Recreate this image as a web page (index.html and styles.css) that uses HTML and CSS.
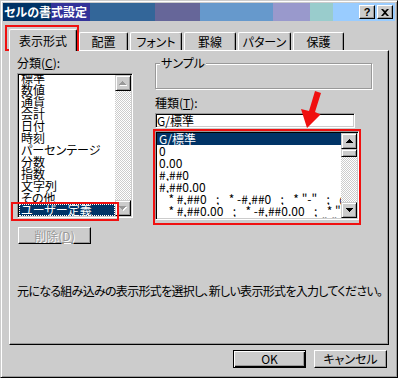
FILE: index.html
```html
<!DOCTYPE html>
<html lang="ja">
<head>
    <meta charset="UTF-8">
    <title>セルの書式設定</title>
    <link rel="stylesheet" href="styles.css">
</head>
<body>

<div class="window">
    <div class="titlebar">
        <span class="title">セルの書式設定</span>
        <div class="title-buttons">
            <span class="title-btn">?</span>
            <span class="title-btn">
                <svg width="8" height="7" viewBox="0 0 8 7"><path d="M0 0h2l2 2 2-2h2L5 3.5 8 7H6L4 5 2 7H0l3-3.5z"/></svg>
            </span>
        </div>
    </div>

    <div class="tabs">
        <div class="tab active">表示形式</div>
        <div class="tab">配置</div>
        <div class="tab">フォント</div>
        <div class="tab">罫線</div>
        <div class="tab">パターン</div>
        <div class="tab">保護</div>
    </div>

    <div class="panel">
        <div class="columns">
            <!-- category list -->
            <div class="col-left">
                <div class="label">分類(<u>C</u>):</div>
                <div class="listbox cat-list">
                    <div class="items bottom">
                        <div class="item">標準</div>
                        <div class="item">数値</div>
                        <div class="item">通貨</div>
                        <div class="item">会計</div>
                        <div class="item">日付</div>
                        <div class="item">時刻</div>
                        <div class="item">パーセンテージ</div>
                        <div class="item">分数</div>
                        <div class="item">指数</div>
                        <div class="item">文字列</div>
                        <div class="item">その他</div>
                        <div class="item selected focus">ユーザー定義</div>
                    </div>
                    <div class="scrollbar">
                        <div class="sb-btn">
                            <svg width="8" height="5" viewBox="0 0 8 5"><path fill="#fff" d="M4 1h1v1h1v1h1v1h1v1H1V4h1V3h1V2h1z"/><path fill="#999" d="M3 0h1v1h1v1h1v1h1v1H0V3h1V2h1V1h1z"/></svg>
                        </div>
                        <div class="sb-track"></div>
                        <div class="sb-btn">
                            <svg width="8" height="5" viewBox="0 0 8 5"><path fill="#fff" d="M1 1h7v1H7v1H6v1H5v1H4V4H3V3H2V2H1z"/><path fill="#999" d="M0 0h7v1H6v1H5v1H4v1H3V3H2V2H1V1H0z"/></svg>
                        </div>
                    </div>
                </div>
                <div class="button disabled delete">削除(<u>D</u>)</div>
            </div>

            <!-- sample and format types -->
            <div class="col-right">
                <div class="group">
                    <div class="group-label">サンプル</div>
                </div>
                <div class="label type-label">種類(<u>T</u>):</div>
                <div class="textbox">G/標準</div>
                <div class="mark">
                    <div class="listbox type-list">
                        <div class="items">
                            <div class="item selected">G/標準</div>
                            <div class="item">0</div>
                            <div class="item">0.00</div>
                            <div class="item">#,##0</div>
                            <div class="item">#,##0.00</div>
                            <div class="item">_ * #,##0_ ;_ * -#,##0_ ;_ * "-"_ ;_ @_ </div>
                            <div class="item">_ * #,##0.00_ ;_ * -#,##0.00_ ;_ * "-"??_ ;_ @_ </div>
                            <div class="item">_ ¥* #,##0_ ;_ ¥* -#,##0_ ;_ ¥* "-"_ ;_ @_ </div>
                        </div>
                        <div class="scrollbar">
                            <div class="sb-btn">
                                <svg width="7" height="4" viewBox="0 0 7 4"><path d="M3 0h1v1h1v1h1v1h1v1H0V3h1V2h1V1h1z"/></svg>
                            </div>
                            <div class="sb-thumb"></div>
                            <div class="sb-track"></div>
                            <div class="sb-btn">
                                <svg width="7" height="4" viewBox="0 0 7 4"><path d="M0 0h7v1H6v1H5v1H4v1H3V3H2V2H1V1H0z"/></svg>
                            </div>
                        </div>
                    </div>
                </div>
            </div>
        </div>

        <p class="desc">元になる組み込みの表示形式を選択し、新しい表示形式を入力してください。</p>
    </div>

    <div class="footer">
        <div class="button default">OK</div>
        <div class="button">キャンセル</div>
    </div>

    <!-- red annotations drawn over the dialog -->
    <div class="mark-box mark-tab"></div>
    <div class="mark-box mark-item"></div>
    <svg class="red-arrow" width="30" height="44" viewBox="0 0 30 44">
        <path fill="#f01010" d="M20 3 26 5 20 24 25.5 26.5 12 40 6 21 14 23z"/>
    </svg>
</div>

</body>
</html>
```

FILE: styles.css
```css
body {
    margin: 0;
    font-family: "Noto Sans CJK JP", sans-serif;
    font-size: 12px;
    font-feature-settings: "palt";
    color: #000;
}
.window {
    position: relative;
    width: 398px;
    height: 378px;
    box-sizing: border-box;
    padding: 2px;
    background-color: #cccccc;
    border: 1px solid;
    border-color: #ccc #000 #000 #ccc;
    box-shadow: inset 1px 1px #fff, inset -1px -1px #999;
}

/* title bar */
.titlebar {
    display: flex;
    align-items: center;
    justify-content: space-between;
    height: 18px;
    padding: 0 2px 0 1px;
    background: linear-gradient(to right,
        #003366 0 48px, #333399 48px 87px, #336699 87px 152px,
        #666699 152px 197px, #6699cc 197px 270px, #9999cc 270px 307px,
        #99cccc 307px 330px, #99ccff 330px);
}
.title {
    color: #fff;
    font-weight: bold;
    line-height: 18px;
}
.title-buttons {
    display: flex;
    gap: 2px;
}
.title-btn {
    display: flex;
    align-items: center;
    justify-content: center;
    width: 16px;
    height: 14px;
    box-sizing: border-box;
    background-color: #ccc;
    border: 1px solid;
    border-color: #fff #000 #000 #fff;
    box-shadow: inset -1px -1px #999;
    font: bold 11px "Liberation Sans", sans-serif;
}

/* tabs */
.tabs {
    display: grid;
    grid-template-columns: 68px 49px 52px 52px 53px 51px;
    column-gap: 2px;
    align-items: end;
    height: 21px;
    margin: 8px 6px 0;
}
.tab {
    height: 18px;
    box-sizing: border-box;
    padding-top: 3px;
    line-height: 12px;
    text-align: center;
    white-space: nowrap;
    background-color: #ccc;
    border: 1px solid;
    border-bottom: none;
    border-color: #fff #000 #000 #fff;
    border-radius: 2px 2px 0 0;
    box-shadow: inset -1px 0 #999;
}
.tab.active {
    position: relative;
    z-index: 1;
    height: 22px;
    margin-bottom: -1px;
    padding-top: 5px;
}

/* tab page */
.panel {
    height: 295px;
    box-sizing: border-box;
    margin: 0 6px;
    padding: 6px 7px 0;
    border: 1px solid;
    border-color: #fff #000 #000 #fff;
    box-shadow: inset -1px -1px #999;
}
.columns {
    display: flex;
    gap: 22px;
}
.col-left {
    width: 116px;
}
.col-right {
    width: 217px;
}
.label {
    line-height: 12px;
    height: 12px;
}
.label u {
    text-underline-offset: 1px;
}

/* list boxes */
.listbox {
    display: flex;
    box-sizing: border-box;
    padding: 1px;
    background-color: #fff;
    border: 1px solid;
    border-color: #999 #fff #fff #999;
    box-shadow: inset 1px 1px #000, inset -1px -1px #ccc;
}
.cat-list {
    height: 145px;
    margin-top: 4px;
}
.type-list {
    height: 89px;
}
.items {
    flex: 1;
    display: flex;
    flex-direction: column;
    overflow: hidden;
}
.items.bottom {
    justify-content: flex-end;
}
.item {
    flex: none;
    height: 12px;
    line-height: 12px;
    padding-left: 2px;
    white-space: pre;
    overflow: hidden;
}
.item.selected {
    background-color: #003366;
    color: #fff;
}
.item.focus {
    outline: 1px dotted #fff;
    outline-offset: -1px;
}

/* scroll bars */
.scrollbar {
    display: flex;
    flex-direction: column;
    width: 16px;
}
.sb-btn,
.sb-thumb {
    display: flex;
    align-items: center;
    justify-content: center;
    flex: none;
    height: 16px;
    box-sizing: border-box;
    background-color: #ccc;
    border: 1px solid;
    border-color: #ccc #000 #000 #ccc;
    box-shadow: inset 1px 1px #fff, inset -1px -1px #999;
}
.sb-thumb {
    height: 8px;
}
.sb-track {
    flex: 1;
    background: repeating-conic-gradient(#fff 0 25%, #ccc 0 50%) 0 0 / 2px 2px;
}

/* buttons */
.button {
    display: flex;
    align-items: center;
    justify-content: center;
    width: 73px;
    height: 17px;
    box-sizing: border-box;
    line-height: 12px;
    background-color: #ccc;
    border: 1px solid;
    border-color: #fff #000 #000 #fff;
    box-shadow: inset -1px -1px #999;
}
.button.default {
    border-color: #000;
    box-shadow: inset 1px 1px #fff, inset -1px -1px #000, inset -2px -2px #999;
}
.button.disabled {
    color: #999;
    text-shadow: 1px 1px #fff;
}
.delete {
    margin: 9px 0 0 1px;
}

/* sample group */
.group {
    height: 26px;
    box-sizing: border-box;
    margin-top: 6px;
    border: 1px solid #999;
    box-shadow: inset 1px 1px #fff, 1px 1px #fff;
}
.group-label {
    width: fit-content;
    margin: -7px 0 0 4px;
    padding: 0 1px;
    line-height: 12px;
    background-color: #ccc;
}
.type-label {
    margin-top: 8px;
}
.textbox {
    width: 200px;
    height: 15px;
    box-sizing: border-box;
    margin-top: 4px;
    padding: 0 1px;
    line-height: 13px;
    background-color: #fff;
    border: 1px solid;
    border-color: #999 #fff #fff #999;
    box-shadow: inset 1px 1px #000, inset -1px -1px #ccc;
}
.mark {
    width: 208px;
    box-sizing: border-box;
    margin: 1px 0 0 -2px;
    padding-bottom: 3px;
    border: 2px solid #f01010;
}

.desc {
    margin: 41px 0 0;
    line-height: 12px;
    letter-spacing: -0.7px;
    white-space: nowrap;
}

.footer {
    display: flex;
    justify-content: flex-end;
    gap: 8px;
    margin: 5px 8px 0 0;
}
.footer .button {
    height: 18px;
}

/* annotations */
.mark-box {
    position: absolute;
    box-sizing: border-box;
    border: 2px solid #f01010;
}
.mark-tab {
    left: 4px;
    top: 24px;
    width: 74px;
    height: 26px;
}
.mark-item {
    left: 10px;
    top: 201px;
    width: 108px;
    height: 19px;
}
.red-arrow {
    position: absolute;
    left: 294px;
    top: 87px;
}
```
